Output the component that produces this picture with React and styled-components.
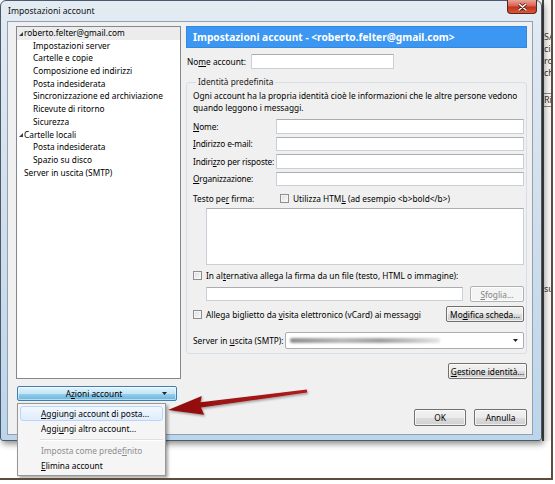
import styled, { createGlobalStyle } from 'styled-components';

const GlobalStyle = createGlobalStyle`
  body {
    margin: 0;
    background: #fff;
    font-family: 'Noto Sans', 'Open Sans', sans-serif;
    font-size: 8.3px;
    color: #000;
  }
  u { text-underline-offset: 1px; }
`;

const Frame = styled.div`
  position: relative;
  width: 551px;
  height: 478px;
  border-right: 2px solid #5e4d3f;
  border-bottom: 2px solid #5e4d3f;
  display: flex;
  align-items: flex-start;
  overflow: hidden;
  background: #fff;
`;

const Win = styled.div`
  position: relative;
  z-index: 1;
  box-sizing: border-box;
  width: 542px;
  height: 441px;
  flex-shrink: 0;
  display: flex;
  flex-direction: column;
  padding: 0 8px 5px 6px;
  border: 1px solid #4a5a6c;
  border-radius: 6px 6px 3px 3px;
  background: linear-gradient(180deg, #e3ebf3 0%, #d3dfeb 45%, #bcd5ea 100%);
  box-shadow: 2px 3px 6px rgba(0, 0, 0, 0.45);
`;

const TitleBar = styled.div`
  height: 20px;
  margin: 0 -8px 0 -6px;
  padding: 0 4px 0 7px;
  display: flex;
  align-items: center;
  justify-content: space-between;
  font-size: 8.6px;
  color: #111;
`;

const CloseBtn = styled.div`
  align-self: flex-start;
  margin-top: -1px;
  width: 30px;
  height: 14px;
  box-sizing: border-box;
  display: flex;
  align-items: center;
  justify-content: center;
  border: 1px solid #5b2319;
  border-top: none;
  border-radius: 0 0 4px 4px;
  background: linear-gradient(180deg, #eba597 0%, #d9634f 45%, #c2341e 55%, #d9563c 100%);
`;

const Client = styled.div`
  flex: 1;
  display: flex;
  flex-direction: column;
  background: #f0f0f0;
  border: 1px solid #8ea1b5;
  padding: 4px 5px 8px 8px;
`;

const Main = styled.div`
  display: grid;
  grid-template-columns: 165px 341px;
  column-gap: 5px;
  height: 375px;
`;

const LeftCol = styled.div`
  position: relative;
  display: flex;
  flex-direction: column;
  gap: 7px;
`;

const Tree = styled.div`
  flex: 1;
  background: #fff;
  border: 1px solid #828790;
`;

const TreeRow = styled.div`
  height: 12.7px;
  line-height: 12.7px;
  display: flex;
  align-items: center;
  padding-left: ${(p) => (p.$level ? 16 : 7)}px;
  position: relative;
  background: ${(p) => (p.$selected ? '#ececec' : 'transparent')};
  white-space: nowrap;
`;

const Expander = styled.svg`
  position: absolute;
  left: 2px;
  top: 4.5px;
`;

const RightCol = styled.div`
  display: flex;
  flex-direction: column;
`;

const Header = styled.div`
  height: 22px;
  box-sizing: border-box;
  display: flex;
  align-items: center;
  padding-left: 6px;
  background: #3b97f2;
  border: 1px solid #3688dc;
  color: #fff;
  font-weight: bold;
  font-size: 10.2px;
  white-space: nowrap;
`;

const Row = styled.div`
  display: flex;
  align-items: center;
  height: ${(p) => p.$h || 15}px;
  margin-top: ${(p) => p.$mt || 0}px;
  gap: ${(p) => p.$gap || 0}px;
  white-space: nowrap;
`;

const Label = styled.span`
  width: ${(p) => p.$w}px;
  flex-shrink: 0;
  padding-left: ${(p) => p.$pl || 0}px;
  box-sizing: border-box;
  white-space: nowrap;
`;

const Input = styled.div`
  box-sizing: border-box;
  height: ${(p) => p.$h || 14.5}px;
  width: ${(p) => (p.$w ? `${p.$w}px` : 'auto')};
  flex: ${(p) => (p.$w ? 'none' : 1)};
  margin-left: ${(p) => p.$ml || 0}px;
  background: #fff;
  border: 1px solid #c9d0d8;
  border-top-color: #abadb3;
`;

const Group = styled.fieldset`
  margin: 8px 0 0;
  padding: 3px 2px 4px 6px;
  border: 1px solid #d5dfe5;
  border-radius: 3px;
  min-inline-size: 0;
`;

const Legend = styled.legend`
  padding: 0 2px;
  margin-left: 3px;
  line-height: 10px;
  color: #222;
`;

const Desc = styled.p`
  margin: 0;
  line-height: 12px;
  white-space: nowrap;
`;

const FieldGrid = styled.div`
  display: grid;
  grid-template-columns: 83px 1fr;
  grid-auto-rows: 14.5px;
  row-gap: 3px;
  margin-top: 5px;
  align-items: center;
  white-space: nowrap;
  letter-spacing: -0.15px;
`;

const Check = styled.span`
  width: 9px;
  height: 9px;
  box-sizing: border-box;
  flex-shrink: 0;
  border: 1px solid #8f8f8f;
  background: linear-gradient(135deg, #dcdcdc, #fbfbfb);
  box-shadow: inset 0 0 0 1px #f4f4f4;
`;

const TextArea = styled.div`
  height: 57px;
  margin: 4px 0 0 13px;
  box-sizing: border-box;
  background: #fff;
  border: 1px solid #c9d0d8;
  border-top-color: #abadb3;
`;

const Button = styled.div`
  box-sizing: border-box;
  width: ${(p) => p.$w}px;
  height: ${(p) => p.$h || 16}px;
  flex-shrink: 0;
  display: flex;
  align-items: center;
  justify-content: center;
  border: 1px solid ${(p) => (p.$disabled ? '#adb2b5' : '#707070')};
  border-radius: 2px;
  color: ${(p) => (p.$disabled ? '#838383' : '#000')};
  background: ${(p) =>
    p.$disabled
      ? '#f4f4f4'
      : 'linear-gradient(180deg, #f2f2f2 0%, #ebebeb 50%, #dddddd 51%, #cfcfcf 100%)'};
  box-shadow: inset 0 0 0 1px rgba(255, 255, 255, 0.7);
  white-space: nowrap;
`;

const Select = styled.div`
  flex: 1;
  height: 17px;
  box-sizing: border-box;
  display: flex;
  align-items: center;
  justify-content: space-between;
  padding: 0 5px 0 4px;
  background: #fff;
  border: 1px solid #abadb3;
  border-radius: 2px;
`;

const Blur = styled.span`
  width: 150px;
  height: 5px;
  background: linear-gradient(90deg, #8f8f8f, #b9b9b9 35%, #a0a0a0 60%, #c9c9c9 85%, #e5e5e5);
  filter: blur(1.1px);
  border-radius: 2px;
`;

const Footer = styled.div`
  margin-top: 8px;
  display: flex;
  justify-content: flex-end;
  gap: 8px;
`;

const SplitButton = styled.div`
  margin-left: 1px;
  width: 160px;
  height: 15px;
  box-sizing: border-box;
  display: flex;
  align-items: center;
  border: 1px solid #3c7fb1;
  border-radius: 2px;
  background: linear-gradient(180deg, #e5f4fc 0%, #c4e5f6 50%, #98d1ef 51%, #68b3db 100%);
  box-shadow: inset 0 0 0 1px rgba(255, 255, 255, 0.5);
`;

const SplitText = styled.span`
  flex: 1;
  text-align: center;
  padding-left: 8px;
`;

const SplitArrow = styled.span`
  width: 14px;
  display: flex;
`;

const Menu = styled.div`
  position: absolute;
  z-index: 3;
  left: 1px;
  top: calc(100% + 2px);
  width: 149px;
  box-sizing: border-box;
  padding: 2px;
  background: #f5f5f5;
  border: 1px solid #979797;
  box-shadow: 2px 2px 3px rgba(0, 0, 0, 0.35);
`;

const MenuItem = styled.div`
  height: 15px;
  box-sizing: border-box;
  display: flex;
  align-items: center;
  padding-left: 20px;
  border-radius: 3px;
  border: 1px solid ${(p) => (p.$hot ? '#b8d6fb' : 'transparent')};
  background: ${(p) => (p.$hot ? 'linear-gradient(180deg, #f3f8fe, #dfecfb)' : 'transparent')};
  color: ${(p) => (p.$disabled ? '#8d8d8d' : '#000')};
  white-space: nowrap;
`;

const MenuSep = styled.div`
  height: 7px;
  margin-left: 20px;
  display: flex;
  align-items: center;
  &::after {
    content: '';
    flex: 1;
    height: 1px;
    background: #e0e0e0;
    border-bottom: 1px solid #fff;
  }
`;

const BgStrip = styled.div`
  flex: 1;
  height: 441px;
  box-sizing: border-box;
  border-left: 2px solid #4b4641;
  background: #f6f5f3;
  display: flex;
  flex-direction: column;
  padding-top: 31px;
  font-size: 9px;
  color: #333;
  overflow: hidden;
  white-space: nowrap;
  line-height: 12px;
`;

const Frag = styled.span`
  margin-top: ${(p) => p.$mt || 0}px;
  ${(p) => p.$boxed && 'border-top: 1px solid #888; border-bottom: 1px solid #888;'}
`;

const Overlay = styled.svg`
  position: absolute;
  z-index: 5;
  left: 0;
  top: 0;
  pointer-events: none;
`;

const tree = [
  { label: 'roberto.felter@gmail.com', level: 0, open: true, selected: true },
  { label: 'Impostazioni server', level: 1 },
  { label: 'Cartelle e copie', level: 1 },
  { label: 'Composizione ed indirizzi', level: 1 },
  { label: 'Posta indesiderata', level: 1 },
  { label: 'Sincronizzazione ed archiviazione', level: 1 },
  { label: 'Ricevute di ritorno', level: 1 },
  { label: 'Sicurezza', level: 1 },
  { label: 'Cartelle locali', level: 0, open: true },
  { label: 'Posta indesiderata', level: 1 },
  { label: 'Spazio su disco', level: 1 },
  { label: 'Server in uscita (SMTP)', level: 0 },
];

const DropArrow = () => (
  <svg width="5" height="3" viewBox="0 0 5 3">
    <path d="M0 0h5L2.5 3z" fill="#222" />
  </svg>
);

const App = () => {
  return (
    <>
      <GlobalStyle />
      <Frame>
        <Win>
          <TitleBar>
            <span>Impostazioni account</span>
            <CloseBtn>
              <svg width="9" height="8" viewBox="0 0 9 8">
                <path d="M1 1l7 6M8 1L1 7" stroke="#5a1a10" strokeWidth="3" strokeLinecap="round" />
                <path d="M1 1l7 6M8 1L1 7" stroke="#fff" strokeWidth="1.6" strokeLinecap="round" />
              </svg>
            </CloseBtn>
          </TitleBar>
          <Client>
            <Main>
              <LeftCol>
                <Tree>
                  {tree.map((t, i) => (
                    <TreeRow key={i} $level={t.level} $selected={t.selected}>
                      {t.open && (
                        <Expander width="4" height="4" viewBox="0 0 4 4">
                          <path d="M4 0V4H0z" fill="#3a3a3a" />
                        </Expander>
                      )}
                      {t.label}
                    </TreeRow>
                  ))}
                </Tree>
                <SplitButton>
                  <SplitText>
                    A<u>z</u>ioni account
                  </SplitText>
                  <SplitArrow>
                    <DropArrow />
                  </SplitArrow>
                </SplitButton>
                <Menu>
                  <MenuItem $hot>
                    <span>
                      <u>A</u>ggiungi account di posta...
                    </span>
                  </MenuItem>
                  <MenuItem>
                    <span>
                      Aggi<u>u</u>ngi altro account...
                    </span>
                  </MenuItem>
                  <MenuSep />
                  <MenuItem $disabled>
                    <span>
                      Imposta come prede<u>f</u>inito
                    </span>
                  </MenuItem>
                  <MenuItem>
                    <span>
                      <u>E</u>limina account
                    </span>
                  </MenuItem>
                </Menu>
              </LeftCol>

              <RightCol>
                <Header>Impostazioni account - &lt;roberto.felter@gmail.com&gt;</Header>
                <Row $mt={6} $h={15}>
                  <Label $w={65} $pl={1}>
                    No<u>m</u>e account:
                  </Label>
                  <Input $w={143} $h={15} />
                </Row>

                <Group>
                  <Legend>Identità predefinita</Legend>
                  <Desc>
                    Ogni account ha la propria identità cioè le informazioni che le altre persone vedono
                    <br />
                    quando leggono i messaggi.
                  </Desc>
                  <FieldGrid>
                    <span>
                      <u>N</u>ome:
                    </span>
                    <Input />
                    <span>
                      <u>I</u>ndirizzo e-mail:
                    </span>
                    <Input />
                    <span>
                      Indiri<u>z</u>zo per risposte:
                    </span>
                    <Input />
                    <span>
                      <u>O</u>rganizzazione:
                    </span>
                    <Input />
                  </FieldGrid>

                  <Row $mt={6} $h={12}>
                    <Label $w={87}>
                      Testo pe<u>r</u> firma:
                    </Label>
                    <Check />
                    <span style={{ marginLeft: 4 }}>
                      Utilizza HTM<u>L</u> (ad esempio &lt;b&gt;bold&lt;/b&gt;)
                    </span>
                  </Row>
                  <TextArea />

                  <Row $mt={5} $h={11} $gap={4}>
                    <Check />
                    <span>
                      In al<u>t</u>ernativa allega la firma da un file (testo, HTML o immagine):
                    </span>
                  </Row>
                  <Row $mt={5} $h={16} $gap={7}>
                    <Input $ml={13} $h={14} />
                    <Button $w={54} $disabled>
                      <span>
                        <u>S</u>foglia...
                      </span>
                    </Button>
                  </Row>
                  <Row $mt={4} $h={16} $gap={4}>
                    <Check />
                    <span style={{ flex: 1 }}>
                      Allega biglietto da <u>v</u>isita elettronico (vCard) ai messaggi
                    </span>
                    <Button $w={78}>
                      <span>
                        Mo<u>d</u>ifica scheda...
                      </span>
                    </Button>
                  </Row>
                  <Row $mt={10} $h={17}>
                    <Label $w={92}>
                      Server in <u>u</u>scita (SMTP):
                    </Label>
                    <Select>
                      <Blur />
                      <DropArrow />
                    </Select>
                  </Row>
                </Group>

                <Row $mt={9} $h={16} style={{ justifyContent: 'flex-end' }}>
                  <Button $w={79}>
                    <span>
                      <u>G</u>estione identità...
                    </span>
                  </Button>
                </Row>
              </RightCol>
            </Main>
            <Footer>
              <Button $w={52} $h={17}>
                OK
              </Button>
              <Button $w={53} $h={17}>
                Annulla
              </Button>
            </Footer>
          </Client>
        </Win>

        <BgStrip>
          <Frag>SA</Frag>
          <Frag>ci</Frag>
          <Frag>ro</Frag>
          <Frag>ch</Frag>
          <Frag $mt={14} $boxed>
            Ris
          </Frag>
          <Frag $mt={176}>su</Frag>
        </BgStrip>

        <Overlay width="555" height="484" viewBox="0 0 555 484">
          <defs>
            <filter id="sh" x="-10%" y="-50%" width="130%" height="200%">
              <feDropShadow dx="1" dy="1.5" stdDeviation="1" floodOpacity="0.35" />
            </filter>
            <linearGradient id="ar" x1="0" x2="1" y1="0" y2="0">
              <stop offset="0" stopColor="#8e0d0d" />
              <stop offset="1" stopColor="#b01c1c" />
            </linearGradient>
          </defs>
          <polygon
            filter="url(#sh)"
            fill="url(#ar)"
            points="306.8,389.5 200.5,402.3 201.8,395.9 168,410 204.2,414.7 201,407.5 307.2,392.5"
          />
        </Overlay>
      </Frame>
    </>
  );
};

export default App;
